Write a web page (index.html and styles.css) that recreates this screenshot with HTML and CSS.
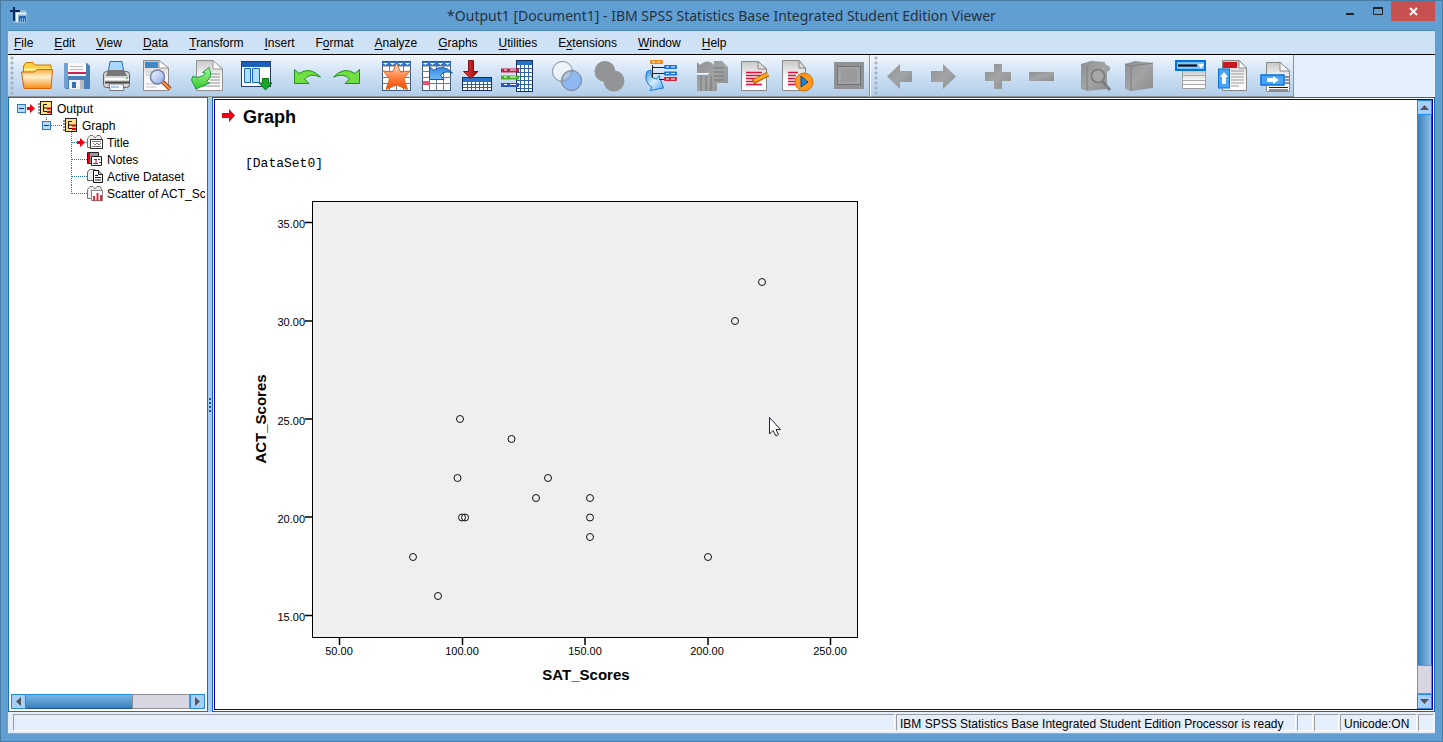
FILE: index.html
```html
<!DOCTYPE html>
<html lang="en">
<head>
<meta charset="utf-8">
<title>*Output1 [Document1] - IBM SPSS Statistics Base Integrated Student Edition Viewer</title>
<link rel="stylesheet" href="styles.css">
</head>
<body>
<svg class="defs" aria-hidden="true">
  <defs>
    <linearGradient id="gOrange" x1="0" y1="0" x2="0" y2="1"><stop offset="0" stop-color="#ffb040"/><stop offset=".4" stop-color="#fff0cc"/><stop offset="1" stop-color="#f88c10"/></linearGradient>
    <linearGradient id="gStar" x1="0" y1="0" x2="0" y2="1"><stop offset="0" stop-color="#ffe8d8"/><stop offset=".5" stop-color="#ff8848"/><stop offset="1" stop-color="#f04800"/></linearGradient>
    <linearGradient id="gSky" x1="0" y1="0" x2="0" y2="1"><stop offset="0" stop-color="#3088e0"/><stop offset="1" stop-color="#70b8f4"/></linearGradient>
    <linearGradient id="gSkyLight" x1="0" y1="0" x2="1" y2="1"><stop offset="0" stop-color="#3090e8"/><stop offset=".5" stop-color="#d8f0ff"/><stop offset="1" stop-color="#48a0f0"/></linearGradient>
    <linearGradient id="gGreen" x1="0" y1="0" x2="0" y2="1"><stop offset="0" stop-color="#b0f8a0"/><stop offset="1" stop-color="#30c828"/></linearGradient>
    <linearGradient id="gPaper" x1="0" y1="0" x2="0" y2="1"><stop offset="0" stop-color="#c8c8c8"/><stop offset=".5" stop-color="#f4f4f4"/><stop offset="1" stop-color="#ffffff"/></linearGradient>
    <linearGradient id="gGrey" x1="0" y1="0" x2="1" y2="1"><stop offset="0" stop-color="#8c8e90"/><stop offset=".5" stop-color="#a2a4a6"/><stop offset="1" stop-color="#8a8c8e"/></linearGradient>
    <linearGradient id="gRed" x1="0" y1="0" x2="1" y2="0"><stop offset="0" stop-color="#f04040"/><stop offset="1" stop-color="#900808"/></linearGradient>
    <linearGradient id="gLens" x1="0" y1="0" x2="1" y2="1"><stop offset="0" stop-color="#f4faff"/><stop offset="1" stop-color="#90a8e8"/></linearGradient>
  </defs>
</svg>

<header class="titlebar">
  <svg class="app-icon" width="18" height="18" viewBox="0 0 18 18"><rect x="3" y="3" width="14" height="13" rx="3" fill="#8ab8de"/><path d="M0 4H10M4 0V14" stroke="#0c2860" stroke-width="2"/><path d="M7 15V6.500H16" fill="none" stroke="#e8f4ff" stroke-width="2"/><rect x="9" y="9" width="7" height="6" fill="#2868b0"/><path d="M10.500 15V12M12.500 15V11M14.500 15V12" stroke="#88bce8"/></svg>
  <h1 class="title">*Output1 [Document1] - IBM SPSS Statistics Base Integrated Student Edition Viewer</h1>
  <div class="window-buttons">
    <button class="win" aria-label="Minimize"><svg width="28" height="20"><path d="M11 13H19" stroke="#222" stroke-width="2"/></svg></button>
    <button class="win" aria-label="Maximize"><svg width="28" height="20"><path d="M10.500 6.500H19.500V13.500H10.500Z" fill="none" stroke="#222"/><path d="M10 7H20" stroke="#222" stroke-width="2"/></svg></button>
    <button class="win close" aria-label="Close"><svg width="44" height="20"><path d="M19 7L26 14M26 7L19 14" stroke="#fff" stroke-width="2"/></svg></button>
  </div>
</header>

<div class="client">
<nav class="menubar">
  <button><u>F</u>ile</button><button><u>E</u>dit</button><button><u>V</u>iew</button><button><u>D</u>ata</button><button><u>T</u>ransform</button><button><u>I</u>nsert</button><button>F<u>o</u>rmat</button><button><u>A</u>nalyze</button><button><u>G</u>raphs</button><button><u>U</u>tilities</button><button>E<u>x</u>tensions</button><button><u>W</u>indow</button><button><u>H</u>elp</button>
</nav>

<div class="toolbars">
  <div class="toolbar file-tools">
    <span class="grip"></span>
    <div class="group">
      <button aria-label="Open"><svg viewBox="0 0 32 32"><path d="M2.500 26V6L5 2.500H12L14 5H30V26Z" fill="#ffd040" stroke="#c87808"/><path d="M3 9.500H30" stroke="#fff2b0" stroke-width="2"/><path d="M0.500 12H13L16 9.500H31.500L30 28.500H3Z" fill="url(#gOrange)" stroke="#d06808"/></svg></button>
      <button aria-label="Save"><svg viewBox="0 0 32 32"><path d="M3 3H26L29 6V29H5L3 27Z" fill="#4a80ba"/><path d="M3 3H7V28H4L3 27Z" fill="#70a0d0"/><rect x="7" y="3" width="18" height="13" fill="#f8f8f8"/><path d="M9 6.500H22M9 9.500H22" stroke="#bbb"/><path d="M7 13H25" stroke="#d82050" stroke-width="2"/><path d="M8 20H23V29H8Z" fill="#f0f0f0"/><path d="M11 22H15V28H11Z" fill="#3470aa"/><path d="M19 20H23V29H19Z" fill="#b8bcc0"/></svg></button>
      <button aria-label="Print"><svg viewBox="0 0 32 32"><path d="M7 13L9 1.500H21L23 13Z" fill="#a8d8ff" stroke="#2870c0"/><rect x="2.500" y="11.500" width="26" height="16" rx="3" fill="#d4d4d4" stroke="#606060"/><path d="M7 10H23L26 16H5Z" fill="#777"/><path d="M4 19H28" stroke="#fff" stroke-width="2"/><path d="M4 22.500H28" stroke="#444" stroke-width="2"/><circle cx="26" cy="18" r="1" fill="#40c040"/><path d="M8 24H22L23 30.500H9Z" fill="#f2f8ff" stroke="#777"/><path d="M10 27H18" stroke="#60a0d8"/></svg></button>
      <button aria-label="Print preview"><svg viewBox="0 0 32 32"><path d="M2.500 0.500H18L27.500 8V30.500H2.500Z" fill="url(#gPaper)" stroke="#8c8c8c"/><path d="M4 2H17V8H4Z" fill="#4088c8"/><path d="M18 0.500V8H27.500Z" fill="#fff" stroke="#999"/><path d="M5 12H24M5 15H24M5 24H18M5 27H15" stroke="#c0c0c0"/><circle cx="16.500" cy="17" r="7" fill="url(#gLens)" stroke="#7880a8" stroke-width="1.500"/><path d="M22 22L29 29" stroke="#a03010" stroke-width="4"/><path d="M22 22L29 29" stroke="#ff9850" stroke-width="2"/></svg></button>
    </div>
    <div class="group">
      <button aria-label="Export"><svg viewBox="0 0 32 32"><path d="M5.500 0.500H22L31.500 9V30.500H5.500Z" fill="url(#gPaper)" stroke="#909090"/><path d="M22 0.500V9H31.500Z" fill="#fff" stroke="#999"/><path d="M19 14H29M19 17H29M19 20H29M14 23H29M10 26H29" stroke="#909090"/><path d="M0.500 20L2 16L5 17.500Q14 16 14.500 13L11.500 12.500L18 7.500Q22 17 15.500 21.500L18.500 23L5 29Z" fill="url(#gGreen)" stroke="#189848"/></svg></button>
    </div>
    <div class="group">
      <button aria-label="Recall dialog"><svg viewBox="0 0 32 32"><rect x="0.500" y="1.500" width="29" height="25" fill="#fff" stroke="#283870"/><rect x="1" y="2" width="28" height="5" fill="#1c60b8"/><path d="M3.500 8.500H9.500V22.500H3.500ZM11.500 8.500H18.500V22.500H11.500Z" fill="#b0e0ff" stroke="#1464b8"/><path d="M21.500 18.500H27.500V23H31L24.500 30L18 23H21.500Z" fill="#18a828" stroke="#087010"/></svg></button>
    </div>
    <div class="group">
      <button aria-label="Undo"><svg viewBox="0 0 32 32"><path d="M3.500 9.500L8 13.500Q19 6 29.500 17Q19 12.500 13.500 19L18 23.500H3.500Z" fill="#70e040" stroke="#208c20"/></svg></button>
      <button aria-label="Redo"><svg viewBox="0 0 32 32"><path d="M28.500 9.500L24 13.500Q13 6 2.500 17Q13 12.500 18.500 19L14 23.500H28.500Z" fill="#70e040" stroke="#208c20"/></svg></button>
    </div>
    <div class="group">
      <button aria-label="Go to case"><svg viewBox="0 0 32 32"><rect x="1.500" y="1.500" width="28" height="29" fill="#fff" stroke="#405878"/><path d="M1 6H30M1 11.500H30M1 17.500H30M1 23.500H30M8.500 1V31M15.500 1V31M22.500 1V31" stroke="#687c98"/><path d="M1 2H30V6H1Z" fill="#3474c8"/><path d="M2 3L7 3L4.500 5ZM9 3L14 3L11.500 5ZM17 3H22L19.500 5ZM24 3H29L26.500 5Z" fill="#fff"/><path d="M15.500 3L19.500 12L28.500 11L23 19L26.500 29.500L15.500 25L5 29.500L8.500 19L2.500 11L11.500 12Z" fill="url(#gStar)" stroke="#e06820"/></svg></button>
      <button aria-label="Go to variable"><svg viewBox="0 0 32 32"><rect x="1.500" y="1.500" width="28" height="29" fill="#fff" stroke="#405878"/><path d="M1 6H30M1 11.500H30M1 17.500H30M1 23.500H30M8.500 1V31M15.500 1V31M22.500 1V31" stroke="#687c98"/><path d="M1 2H30V6H1Z" fill="#3474c8"/><path d="M2 3H7L4.500 5ZM9 3H14L11.500 5ZM17 3H22L19.500 5ZM24 3H29L26.500 5Z" fill="#fff"/><rect x="2" y="21" width="6" height="4" fill="#f05068"/><path d="M8.500 6.500L12.500 10Q23 4 31.500 13Q24 10 19.500 15L23 19.500H8.500Z" fill="url(#gSky)" stroke="#1458a8"/></svg></button>
      <button aria-label="Variables"><svg viewBox="0 0 32 32"><rect x="1.500" y="17.500" width="29" height="13" fill="#fff" stroke="#183060"/><rect x="2" y="18" width="28" height="4" fill="#2474c8"/><path d="M2 24.500H30M2 27.500H30M6.500 22V30M10.500 22V30M14.500 22V30M18.500 22V30M22.500 22V30M26.500 22V30" stroke="#3464a0"/><path d="M7.500 0.500H12.500V11.500H17L10 18.500L2.500 11.500H7.500Z" fill="url(#gRed)" stroke="#801010"/></svg></button>
      <button aria-label="Value labels"><svg viewBox="0 0 32 32"><rect x="15.500" y="0.500" width="16" height="31" fill="#fff" stroke="#183060"/><rect x="16" y="1" width="15" height="4" fill="#2474c8"/><path d="M16 8.500H31M16 12.500H31M16 16.500H31M16 20.500H31M16 24.500H31M16 28.500H31M19.500 5V31M23.500 5V31M27.500 5V31" stroke="#3464a0"/><path d="M0 10.500H18" stroke="#c02048" stroke-width="4"/><path d="M0 17.500H18" stroke="#48b020" stroke-width="4"/><path d="M0 25H18" stroke="#2858c8" stroke-width="4"/><path d="M3 10H6M9 10H15M3 17H6M9 17H15M3 24.500H6M9 24.500H15" stroke="#fff"/></svg></button>
    </div>
    <div class="group medium">
      <button aria-label="Use variable sets"><svg viewBox="0 0 32 32"><circle cx="11.500" cy="11.500" r="10" fill="#fff" fill-opacity=".55" stroke="#808890"/><circle cx="20.500" cy="20.500" r="10" fill="#80b0f0" fill-opacity=".8" stroke="#707890"/><path d="M11 20.500Q12 12 20.500 11A10 10 0 0 1 11 20.500Z" fill="#b0c8e4" stroke="#909aa8"/></svg></button>
      <button aria-label="Show all variables" disabled><svg viewBox="0 0 32 32"><circle cx="11" cy="11.500" r="10.500" fill="#929496"/><circle cx="20" cy="21" r="10.500" fill="#929496"/></svg></button>
    </div>
    <div class="group spaced">
      <button aria-label="Select last output"><svg viewBox="0 0 32 32"><rect x="5" y="0" width="13" height="4" rx="1" fill="#f08818"/><rect x="19" y="5" width="13" height="4" rx="1" fill="#1c70e0"/><rect x="19" y="11.500" width="13" height="4" rx="1" fill="#1c70e0"/><rect x="19" y="17" width="13" height="4" rx="1" fill="#d02040"/><path d="M7 2H10M12 2H15M21 7H24M26 7H30M21 13.500H24M26 13.500H30M21 19H24M26 19H30" stroke="#fff"/><path d="M2 11.500L6 10Q5 19 12 19L14 15.500L18.500 28L5 30.500L7 27Q-2 22 2 11.500Z" fill="url(#gSkyLight)" stroke="#1878d8"/><path d="M7.500 5V18M7.500 7.500H19M7.500 13.500H19M14 19.500H19" fill="none" stroke="#222"/></svg></button>
    </div>
    <div class="group spaced medium">
      <button aria-label="Associate autoscript" disabled><svg viewBox="0 0 32 32"><path d="M1 2L4 5Q12 -2 18 5V1H26L32 7V23H21V31H1V15H12V13H1Z" fill="url(#gGrey)"/><path d="M5 16V31M10 16V31M15 16V31M18 8H28M18 12H28M18 16H28M18 20H28" stroke="#737577"/><path d="M1 13.500H13" stroke="#f0f4fa"/></svg></button>
      <button aria-label="Create or edit autoscript"><svg viewBox="0 0 32 32"><path d="M2.500 1.500H19L27.500 9V30.500H2.500Z" fill="url(#gPaper)" stroke="#888"/><path d="M19 1.500V9H27.500Z" fill="#ddd" stroke="#888"/><path d="M7 12.500H23M7 15.500H22M7 18.500H17M7 21.500H14M7 24.500H23" stroke="#e01038" stroke-width="1.600"/><path d="M14 22L29 14" stroke="#b86008" stroke-width="5"/><path d="M15 21L29 14" stroke="#ffa820" stroke-width="3"/></svg></button>
      <button aria-label="Run script"><svg viewBox="0 0 32 32"><path d="M0.500 0.500H17L23.500 8V30.500H0.500Z" fill="url(#gPaper)" stroke="#888"/><path d="M17 0.500V8H23.500Z" fill="#ddd" stroke="#888"/><path d="M6 12.500H16M6 15.500H14M6 18.500H13M6 21.500H13M6 24.500H14" stroke="#e01038" stroke-width="1.600"/><circle cx="22" cy="22" r="9" fill="#ff9818" stroke="#c87010"/><path d="M19 16L26 22L19 27Z" fill="#2080d8" stroke="#0c4888"/></svg></button>
    </div>
    <div class="group spaced">
      <button aria-label="Designate window" disabled><svg viewBox="0 0 32 32"><rect x="1" y="2" width="30" height="27" fill="#909294"/><rect x="4.500" y="6.500" width="23" height="18" fill="#a2a4a6" stroke="#707274"/><rect x="8" y="9" width="16" height="13" fill="#989a9c"/></svg></button>
    </div>
  </div>
  <div class="toolbar outline-tools">
    <span class="grip"></span>
    <div class="group medium">
      <button aria-label="Promote" disabled><svg viewBox="0 0 32 32"><path d="M3 16.500L16 4V11H28V22H16V29Z" fill="url(#gGrey)"/></svg></button>
      <button aria-label="Demote" disabled><svg viewBox="0 0 32 32"><path d="M29 16.500L16 4V11H4V22H16V29Z" fill="url(#gGrey)"/></svg></button>
    </div>
    <div class="group wide medium">
      <button aria-label="Expand" disabled><svg viewBox="0 0 32 32"><path d="M12 4H20V12H29V21H20V29H12V21H3V12H12Z" fill="url(#gGrey)"/></svg></button>
      <button aria-label="Collapse" disabled><svg viewBox="0 0 32 32"><path d="M4 12H29V21H4Z" fill="url(#gGrey)"/></svg></button>
    </div>
    <div class="group wide medium">
      <button aria-label="Show" disabled><svg viewBox="0 0 32 32"><path d="M1 4L11 1L25 2V4L30 7V10L27 12V29L7 31L1 29Z" fill="url(#gGrey)"/><circle cx="18" cy="16" r="6.500" fill="#a6a8aa" stroke="#76787a" stroke-width="1.500"/><path d="M22 21L30 30" stroke="#7c7e80" stroke-width="3"/><path d="M7 6V30" stroke="#7d7f81"/></svg></button>
      <button aria-label="Hide" disabled><svg viewBox="0 0 32 32"><path d="M2 4L12 1L30 3V28L8 31L2 29Z" fill="url(#gGrey)"/><path d="M2 4L8 6V31M8 6L30 3" fill="none" stroke="#7d7f81"/></svg></button>
    </div>
    <div class="group spaced medium">
      <button aria-label="Insert heading"><svg viewBox="0 0 32 32"><path d="M8.500 10.500H31.500V28.500H8.500Z" fill="url(#gPaper)" stroke="#a0a0a0"/><path d="M9 15.500H31M9 20.500H31M9 24.500H31" stroke="#aaa"/><rect x="2" y="1" width="29" height="9" fill="#78c4ff" stroke="#0870e0" stroke-width="2"/><path d="M4 5.500H23" stroke="#000" stroke-width="2"/><path d="M24 4H30L27 8.500Z" fill="#fff"/></svg></button>
      <button aria-label="Insert title"><svg viewBox="0 0 32 32"><path d="M5.500 0.500H22L29.500 8V30.500H5.500Z" fill="url(#gPaper)" stroke="#888"/><path d="M6 2H20V8H6Z" fill="#c81820"/><path d="M22 0.500V8H29.500Z" fill="#fff" stroke="#888"/><path d="M14 11H27M14 14H27M14 17H27M14 20H27M14 23H27M14 26H22" stroke="#999"/><rect x="1.500" y="9" width="11" height="19" fill="#48a4f8" stroke="#0870e0"/><path d="M7 12L11 17H9V24H5V17H3Z" fill="#fff"/></svg></button>
      <button aria-label="Insert text"><svg viewBox="0 0 32 32"><path d="M6.500 2.500H20L29.500 11V31.500H6.500Z" fill="url(#gPaper)" stroke="#888"/><path d="M20 2.500V11H29.500Z" fill="#fff" stroke="#888"/><path d="M25 17H29M25 20H29M25 23H29M9 27.500H28M9 30H28" stroke="#222"/><rect x="1" y="15" width="23" height="10" fill="#48a4f8" stroke="#0870e0" stroke-width="1.500"/><path d="M7 18H13V16L19 20L13 24V22H7Z" fill="#fff"/></svg></button>
    </div>
  </div>
</div>

<main class="workspace">
  <aside class="outline">
    <div class="tree">
      <button class="node"><svg width="44" height="17"><rect x="8.500" y="4.500" width="8" height="8" fill="#b8daff" stroke="#3474c8"/><path d="M10 8.500H15" stroke="#103880"/><path d="M18 7H21V4L26 8.500L21 13V10H18Z" fill="#f00010"/><rect x="31.500" y="1.500" width="11" height="13" fill="#ffe080" stroke="#222"/><path d="M29 4H32M29 7H32M29 10H32M29 13H32" stroke="#222"/><path d="M38 4.500H34.500V11.500H38M34.500 8H38" fill="none" stroke="#111"/><path d="M38 8.500H42M38 12H42" stroke="#e00010" stroke-width="2"/></svg>Output</button>
      <button class="node"><svg width="69" height="17"><path class="branch" d="M37.500 0V4M42 8.500H53M62.500 15V17"/><rect x="33.500" y="4.500" width="8" height="8" fill="#b8daff" stroke="#3474c8"/><path d="M35 8.500H40" stroke="#103880"/><rect x="56.500" y="1.500" width="11" height="13" fill="#ffe080" stroke="#222"/><path d="M54 4H57M54 7H57M54 10H57M54 13H57" stroke="#222"/><path d="M63 4.500H59.500V11.500H63M59.500 8H63" fill="none" stroke="#111"/><path d="M63 8.500H67M63 12H67" stroke="#e00010" stroke-width="2"/></svg>Graph</button>
      <button class="node"><svg width="94" height="17"><path class="branch" d="M62.500 0V17M63 8.500H78"/><path d="M68 7H71V4L76 8.500L71 13V10H68Z" fill="#f00010"/><path d="M78.500 4.500L81 1.500H84L86 4L88 1.500H91L92.500 4V13.500H78.500Z" fill="#eee" stroke="#777"/><rect x="81.500" y="5.500" width="12" height="9" fill="#fff" stroke="#333"/><path d="M83 7.500H92M84 9L86 11L88 9L90 11L92 9M83 12.500H92" fill="none" stroke="#777"/></svg>Title</button>
      <button class="node"><svg width="94" height="17"><path class="branch" d="M62.500 0V17M63 8.500H78"/><path d="M78.500 1.500H89.500V12.500H78.500Z" fill="#999" stroke="#222"/><path d="M80 2V12" stroke="#e00010" stroke-width="2"/><path d="M82.500 5.500H92.500V14.500H82.500Z" fill="#fff" stroke="#222"/><path d="M85 8.500H88M87 8.500V12M84 12.500H89" stroke="#e00010"/><path d="M89 8.500H91M90 11.500H92" stroke="#444"/></svg>Notes</button>
      <button class="node"><svg width="94" height="17"><path class="branch" d="M62.500 0V17M63 8.500H78"/><path d="M78.500 4L80.500 1.500H86V12.500H78.500Z" fill="#eee" stroke="#666"/><path d="M84.500 2.500H89L93.500 7V14.500H84.500Z" fill="#fff" stroke="#111"/><path d="M89.500 2V6.500H94M86 7.500H89M86 9.500H92M86 12H92" fill="none" stroke="#222"/></svg>Active Dataset</button>
      <button class="node"><svg width="94" height="17"><path class="branch" d="M62.500 0V9M63 8.500H78"/><path d="M78.500 4.500L81 1.500H84L86 4L88 1.500H91L92.500 4V13.500H78.500Z" fill="#eee" stroke="#777"/><rect x="82.500" y="5.500" width="11" height="10" fill="#fff" stroke="#888"/><path d="M85 16V11M88.500 16V8M92 16V10" stroke="#d83040" stroke-width="2"/></svg>Scatter of ACT_Sc</button>
    </div>
    <div class="scroll horizontal">
      <button aria-label="Scroll left"><svg width="13" height="13"><path d="M9 2V11L4 6.500Z" fill="#555"/></svg></button>
      <span class="thumb"></span><span class="track"></span>
      <button aria-label="Scroll right"><svg width="13" height="13"><path d="M4 2V11L9 6.500Z" fill="#555"/></svg></button>
    </div>
  </aside>
  <div class="splitter"><svg width="4" height="14"><path d="M1 1H3M1 5H3M1 9H3M1 13H3" stroke="#205890" stroke-width="2"/></svg></div>
  <section class="viewer">
    <div class="output">
      <div class="heading"><svg width="14" height="14"><path d="M1 4H8V0L14 6.500L8 13V9H1Z" fill="#f00010"/></svg><h2>Graph</h2></div>
      <p class="dataset">[DataSet0]</p>
      <svg class="chart" width="640" height="500" viewBox="240 190 640 500" role="img" aria-label="Scatter of ACT_Scores by SAT_Scores">
        <rect x="312.500" y="201.500" width="545" height="436" fill="#efefef" stroke="#000"/>
        <path d="M305 222.500H312M305 321H312M305 419H312M305 517H312M305 615.500H312M339.500 638V645M462.500 638V645M585 638V645M708 638V645M830.500 638V645" stroke="#000" stroke-width="1.500"/>
        <g class="tick end"><text x="305" y="228">35.00</text><text x="305" y="326">30.00</text><text x="305" y="425">25.00</text><text x="305" y="523">20.00</text><text x="305" y="621">15.00</text></g>
        <g class="tick middle"><text x="339" y="655">50.00</text><text x="462" y="655">100.00</text><text x="585" y="655">150.00</text><text x="707" y="655">200.00</text><text x="830" y="655">250.00</text></g>
        <text class="axis" x="586" y="680">SAT_Scores</text>
        <text class="axis" transform="translate(266 419) rotate(-90)">ACT_Scores</text>
        <g class="points"><circle cx="762" cy="282" r="3.500"/><circle cx="735" cy="321" r="3.500"/><circle cx="460" cy="419" r="3.500"/><circle cx="511.500" cy="439" r="3.500"/><circle cx="457.500" cy="478" r="3.500"/><circle cx="548" cy="478" r="3.500"/><circle cx="536" cy="498" r="3.500"/><circle cx="590" cy="498" r="3.500"/><circle cx="590" cy="517.500" r="3.500"/><circle cx="590" cy="537" r="3.500"/><circle cx="462" cy="517.500" r="3.500"/><circle cx="465" cy="517.500" r="3.500"/><circle cx="413" cy="557" r="3.500"/><circle cx="438" cy="596" r="3.500"/><circle cx="708" cy="557" r="3.500"/></g>
        <path d="M769.500 417.500V434L773 430.500L776 436L778.500 434.500L776 429.500H780.500Z" fill="#fff" stroke="#223"/>
      </svg>
    </div>
    <div class="scroll vertical">
      <button aria-label="Scroll up"><svg width="13" height="13"><path d="M2 9H11L6.500 4Z" fill="#555"/></svg></button>
      <span class="thumb"></span><span class="track"></span>
      <button aria-label="Scroll down"><svg width="13" height="13"><path d="M2 4H11L6.500 9Z" fill="#555"/></svg></button>
    </div>
  </section>
</main>

<footer class="statusbar">
  <span class="fill"></span><span class="ready">IBM SPSS Statistics Base Integrated Student Edition Processor is ready</span><span class="slot"></span><span class="slot large"></span><span class="unicode">Unicode:ON</span><span class="slot"></span>
</footer>
</div>
</body>
</html>
```
FILE: styles.css
```css
* { box-sizing: border-box; }

body {
  margin: 0;
  height: 100vh;
  display: flex;
  flex-direction: column;
  overflow: hidden;
  padding: 0 7px 7px;
  background: #619fd3;
  border: 1px solid #477ba3;
  font: 12px/17px "Liberation Sans", Arial, sans-serif;
  color: #000;
}

button {
  border: 0;
  padding: 0;
  margin: 0;
  background: none;
  font: inherit;
  color: inherit;
}

svg { display: block; flex: none; }
.defs { position: absolute; width: 0; height: 0; }

/* Title bar */
.titlebar {
  display: grid;
  grid-template-columns: 100px 1fr 100px;
  height: 29px;
  flex: none;
}
.app-icon { margin: 6px 2px; }
.title {
  margin: 0;
  text-align: center;
  font: 14px/29px "Noto Sans", "Open Sans", sans-serif;
  color: #24323f;
  white-space: nowrap;
}
.window-buttons { display: flex; justify-content: flex-end; align-items: flex-start; }
.win { height: 20px; }
.win.close { background: #c75050; }

/* Client area */
.client {
  flex: 1;
  min-height: 0;
  display: flex;
  flex-direction: column;
  border-top: 1px solid #4a88bc;
  background: #e4effb;
}
.menubar {
  display: flex;
  gap: 21px;
  height: 24px;
  flex: none;
  padding: 1px 6px 0;
  background: #cfe1f5;
  border-bottom: 1px solid #000;
}
.menubar u { text-underline-offset: 2px; }

/* Toolbars */
.toolbars {
  display: flex;
  height: 42px;
  flex: none;
}
.toolbar {
  display: flex;
  align-items: center;
  background: linear-gradient(#f0f6fd, #cadef3 55%, #b3cde8);
  border-right: 1px solid #8c9298;
  border-bottom: 1px solid #8c9298;
}
.file-tools { padding: 0 4px 0 2px; }
.outline-tools { padding: 0 1px 0 3px; border-left: 1px solid #f8fbff; }
.grip {
  width: 4px;
  height: 40px;
  margin-right: 7px;
  background: radial-gradient(circle at 2px 2px, #a4b2c0 1px, transparent 2px) 0 0 / 4px 5px;
}
.outline-tools .grip { margin-right: 6px; }
.group { display: flex; gap: 8px; }
.group + .group { margin-left: 18px; }
.group.medium { gap: 11px; }
.group + .group.spaced { margin-left: 19px; }
.group + .group.wide { margin-left: 23px; }
.group svg { width: 32px; height: 32px; }

/* Workspace */
.workspace {
  flex: 1;
  min-height: 0;
  display: grid;
  grid-template-columns: 200px 4px 1fr;
}
.outline {
  min-width: 0;
  display: flex;
  flex-direction: column;
  justify-content: space-between;
  background: #fff;
  border: 1px solid #1c70b8;
  padding: 2px;
}
.tree {
  overflow: hidden;
  display: flex;
  flex-direction: column;
  margin-left: -2px;
}
.node {
  display: flex;
  gap: 4px;
  height: 17px;
  line-height: 18px;
  white-space: nowrap;
  text-align: left;
}
.branch { stroke: #2474c0; stroke-dasharray: 1 1; fill: none; }
.splitter {
  display: flex;
  align-items: center;
  background: #a4cbee;
}
.viewer {
  min-width: 0;
  display: flex;
  background: #fff;
  border: 1px solid #1464b4;
  box-shadow: inset 0 0 0 1px #fff, inset 0 0 0 2px #0000a0;
  padding: 2px;
}
.output { flex: 1; min-width: 0; overflow: hidden; padding: 6px 6px 0; }
.heading { display: flex; gap: 8px; align-items: center; height: 22px; }
.heading svg { margin-bottom: 3px; }
.heading h2 { margin: 0; font-size: 18px; line-height: 22px; }
.dataset {
  margin: 27px 24px 17px;
  font: 13px/18px "Liberation Mono", "Courier New", monospace;
}
.chart { margin-left: 19px; }
.tick { font-size: 11px; }
.end { text-anchor: end; }
.middle { text-anchor: middle; }
.axis { font-size: 15px; font-weight: bold; text-anchor: middle; }
.points { fill: none; stroke: #111; stroke-width: 1; }

/* Scroll bars */
.scroll { display: flex; flex: none; }
.scroll button {
  background: #a6cffa;
  border: 1px solid #2488e8;
}
.scroll .track { background: #d8d6e0; border: 1px solid #8c8c98; }
.horizontal { height: 15px; }
.horizontal .thumb {
  flex: 108;
  border-top: 1px solid #2490f0;
  border-bottom: 1px solid #185498;
  background: linear-gradient(#78b4e4, #3c80bc);
}
.horizontal .track { flex: 57; }
.vertical { flex-direction: column; width: 15px; }
.vertical .thumb {
  flex: 553;
  border-left: 1px solid #2490f0;
  border-right: 1px solid #185498;
  background: linear-gradient(90deg, #3c80bc, #8cc0e8);
}
.vertical .track { flex: 27; }

/* Status bar */
.statusbar {
  display: flex;
  gap: 1px;
  height: 22px;
  flex: none;
  padding: 2px 1px 2px 5px;
  border-bottom: 1px solid #a0a8b0;
}
.statusbar span {
  border: 1px solid #fff;
  border-top-color: #9a9ea4;
  border-left-color: #9a9ea4;
  padding: 0 3px;
  line-height: 18px;
  white-space: nowrap;
}
.statusbar .fill { flex: 1; }
.statusbar .ready { width: 400px; }
.statusbar .slot { width: 16px; }
.statusbar .large { width: 25px; }
.statusbar .unicode { width: 77px; }
```
